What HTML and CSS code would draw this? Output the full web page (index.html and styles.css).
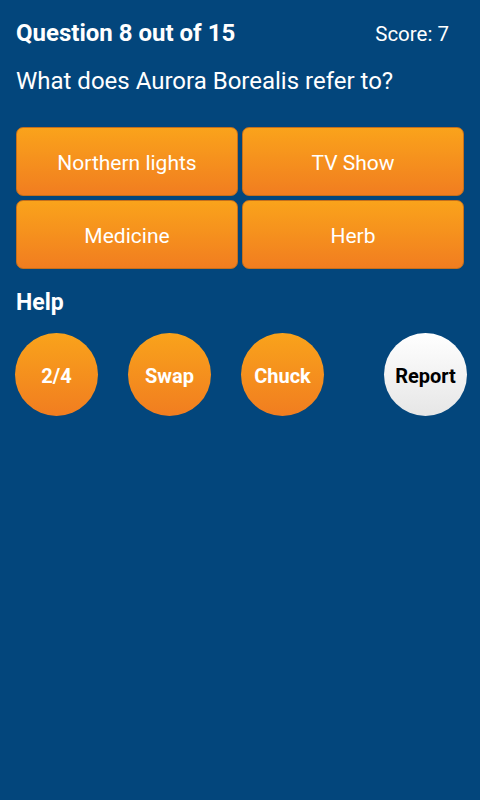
FILE: index.html
```html
<!DOCTYPE html>
<html>
<head>
<meta charset="utf-8">
<link rel="stylesheet" href="styles.css">
</head>
<body>
<div class="screen">
  <div class="header">
    <div class="title">Question 8 out of 15</div>
    <div class="score">Score: 7</div>
  </div>
  <div class="question">What does Aurora Borealis refer to?</div>
  <div class="answers">
    <div class="answer">Northern lights</div>
    <div class="answer">TV Show</div>
    <div class="answer">Medicine</div>
    <div class="answer">Herb</div>
  </div>
  <div class="help-label">Help</div>
  <div class="helps">
    <div class="circle">2/4</div>
    <div class="circle">Swap</div>
    <div class="circle">Chuck</div>
    <div class="spacer"></div>
    <div class="circle report">Report</div>
  </div>
</div>
</body>
</html>
```
FILE: styles.css
```css
html, body {
  margin: 0;
  padding: 0;
  background: #03467c;
}
.screen {
  width: 480px;
  height: 800px;
  background: #03467c;
  font-family: Roboto, "Liberation Sans", sans-serif;
  color: #ffffff;
  box-sizing: border-box;
  padding-top: 18px;
}
.header {
  display: flex;
  justify-content: space-between;
  align-items: baseline;
  padding: 0 31px 0 16px;
  height: 30px;
  line-height: 30px;
}
.title {
  font-weight: bold;
  font-size: 24px;
}
.score {
  font-size: 20.5px;
}
.question {
  padding: 0 16px;
  font-size: 24px;
  line-height: 30px;
  margin-top: 18px;
}
.answers {
  display: grid;
  grid-template-columns: 1fr 1fr;
  gap: 4px;
  margin: 31px 16px 0 16px;
}
.answer {
  height: 69px;
  box-sizing: border-box;
  padding-top: 2px;
  border: 1px solid #c46f1c;
  border-radius: 7px;
  background: linear-gradient(#faa31b, #f17d20);
  display: flex;
  align-items: center;
  justify-content: center;
  font-size: 21px;
}
.help-label {
  font-weight: bold;
  font-size: 23px;
  line-height: 30px;
  padding: 0 16px;
  margin-top: 19px;
}
.helps {
  display: flex;
  gap: 30px;
  padding: 0 15px;
  margin-top: 15px;
}
.circle {
  width: 83px;
  height: 83px;
  box-sizing: border-box;
  padding-top: 3px;
  border-radius: 50%;
  background: linear-gradient(#f9a31b, #f17d20);
  display: flex;
  align-items: center;
  justify-content: center;
  font-weight: bold;
  font-size: 20px;
  flex: none;
}
.spacer {
  flex: 1;
}
.report {
  background: linear-gradient(#ffffff, #e6e6e6);
  color: #000000;
}
```
